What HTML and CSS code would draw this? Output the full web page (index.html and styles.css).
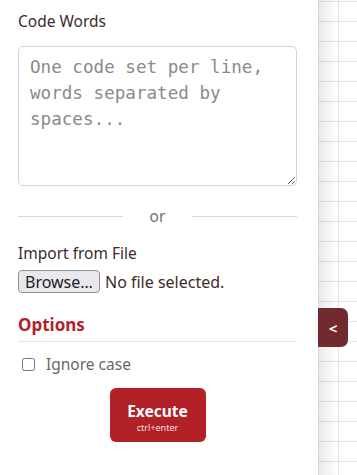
FILE: index.html
```html
<!DOCTYPE html>
<html lang="en">
<head>
  <meta charset="UTF-8" />
  <meta name="viewport" content="width=device-width, initial-scale=1.0" />
  <title>Code Words</title>
  <link rel="stylesheet" href="styles.css">
</head>
<body>
  <div class="layout">
    <!-- side panel -->
    <aside class="panel">
      <label class="field-label" for="codeWords">Code Words</label>
      <textarea id="codeWords" class="code-input" placeholder="One code set per line, words separated by spaces..."></textarea>

      <div class="divider"><span>or</span></div>

      <div class="field-label">Import from File</div>
      <div class="file-row">
        <button class="browse-btn" type="button">Browse…</button>
        <span class="file-name">No file selected.</span>
      </div>

      <h2 class="section-title">Options</h2>
      <label class="check-row">
        <input type="checkbox" />
        <span>Ignore case</span>
      </label>

      <div class="actions">
        <button class="execute-btn" type="button">
          <span class="execute-main">Execute</span>
          <span class="execute-hint">ctrl+enter</span>
        </button>
      </div>
    </aside>

    <!-- canvas -->
    <section class="canvas">
      <button class="panel-toggle" type="button">&lt;</button>
    </section>
  </div>
</body>
</html>
```

FILE: styles.css
```css
body {
  margin: 0;
  font-family: 'Noto Sans', 'Open Sans', sans-serif;
  background: #ffffff;
  color: #3d2b2b;
}

.layout {
  display: flex;
  height: 100vh;
  overflow: hidden;
}

/* side panel */
.panel {
  width: 318px;
  flex-shrink: 0;
  box-sizing: border-box;
  padding: 11px 21px 0 18px;
  display: flex;
  flex-direction: column;
}

.field-label {
  display: block;
  font-size: 15.5px;
  line-height: 20px;
}

.code-input {
  margin-top: 15px;
  width: 100%;
  height: 140px;
  box-sizing: border-box;
  padding: 7px 11px;
  border: 1px solid #cfd3de;
  border-radius: 5px;
  font-family: 'DejaVu Sans Mono', monospace;
  font-size: 17.6px;
  line-height: 26px;
  color: #333;
  resize: vertical;
}
.code-input::placeholder {
  color: #8a8a8a;
}

/* "or" divider */
.divider {
  margin: 20px 0 17px;
  display: flex;
  align-items: center;
  gap: 27px;
  height: 20px;
  color: #7a6e6e;
  font-size: 15.5px;
}
.divider::before,
.divider::after {
  content: "";
  flex: 1;
  height: 1px;
  background: #e8cfcf;
}

.file-row {
  margin-top: 7px;
  display: flex;
  align-items: center;
  gap: 5px;
  font-size: 16px;
}
.browse-btn {
  height: 23px;
  padding: 0 6px;
  font-family: inherit;
  font-size: 16px;
  color: #222;
  background: #e9e9ed;
  border: 1px solid #8f8f9d;
  border-radius: 4px;
}
.file-name {
  color: #3d2b2b;
}

.section-title {
  margin: 21px 0 0;
  padding-bottom: 5px;
  font-size: 17px;
  line-height: 22px;
  font-weight: bold;
  color: #b52028;
  border-bottom: 1px solid #e1e4ec;
}

.check-row {
  margin-top: 12px;
  display: flex;
  align-items: center;
  gap: 11px;
  padding-left: 4px;
  font-size: 15.5px;
  line-height: 20px;
  color: #706666;
}
.check-row input {
  width: 13px;
  height: 13px;
  margin: 0;
}

.actions {
  display: flex;
  justify-content: center;
  margin-top: 14px;
}
.execute-btn {
  width: 96px;
  height: 54px;
  border: none;
  border-radius: 6px;
  background: #b22028;
  color: #ffffff;
  font-family: inherit;
  display: flex;
  flex-direction: column;
  align-items: center;
  justify-content: center;
  padding: 4px 0 0;
  cursor: pointer;
}
.execute-main {
  font-size: 15.5px;
  font-weight: bold;
  line-height: 18px;
}
.execute-hint {
  margin-top: 2px;
  font-size: 9px;
  line-height: 11px;
  opacity: 0.85;
}

/* grid canvas */
.canvas {
  position: relative;
  flex: 1;
  border-left: 1px solid #d6d6de;
  background:
    linear-gradient(to right, rgba(0, 0, 0, 0.08), rgba(0, 0, 0, 0) 20px),
    linear-gradient(to right, #e2e2ec 1px, transparent 1px) 19px 0 / 20px 20px,
    linear-gradient(to bottom, #e2e2ec 1px, transparent 1px) 0 1px / 20px 20px,
    #ffffff;
}

.panel-toggle {
  position: absolute;
  left: -1px;
  top: 308px;
  width: 30px;
  height: 39px;
  border: none;
  border-radius: 0 7px 7px 0;
  background: #722a2e;
  color: #ffffff;
  font-family: inherit;
  font-size: 15px;
  font-weight: bold;
  padding: 0;
  cursor: pointer;
}
```
